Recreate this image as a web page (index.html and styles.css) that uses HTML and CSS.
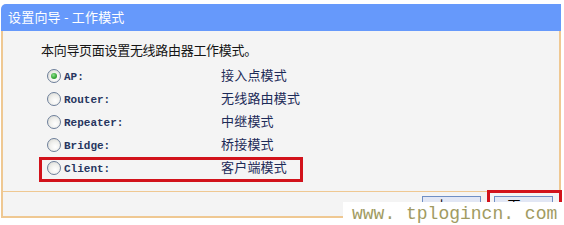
FILE: index.html
```html
<!DOCTYPE html>
<html lang="zh-CN">
<head>
<meta charset="utf-8">
<title>设置向导 - 工作模式</title>
<link rel="stylesheet" href="styles.css">
</head>
<body>
<div class="wizard">
  <div class="wizard-title">设置向导 - 工作模式</div>
  <div class="wizard-body">
    <p class="intro">本向导页面设置无线路由器工作模式。</p>
    <ul class="modes">
      <li class="mode"><span class="radio checked"></span><span class="mode-key">AP:</span><span class="mode-name">接入点模式</span></li>
      <li class="mode"><span class="radio"></span><span class="mode-key">Router:</span><span class="mode-name">无线路由模式</span></li>
      <li class="mode"><span class="radio"></span><span class="mode-key">Repeater:</span><span class="mode-name">中继模式</span></li>
      <li class="mode"><span class="radio"></span><span class="mode-key">Bridge:</span><span class="mode-name">桥接模式</span></li>
      <li class="mode marked"><span class="radio"></span><span class="mode-key">Client:</span><span class="mode-name">客户端模式</span></li>
    </ul>
  </div>
  <div class="wizard-foot">
    <button class="btn" type="button"><span class="btn-label">上一步</span></button>
    <button class="btn btn-next" type="button"><span class="btn-label">下一步</span></button>
  </div>
</div>
<div class="watermark">www. tplogincn. com</div>
</body>
</html>
```
FILE: styles.css
```css
html, body {
  margin: 0;
  padding: 0;
  background: #ffffff;
}

body {
  position: relative;
  width: 564px;
  height: 225px;
  overflow: hidden;
  font-family: "Noto Sans CJK SC", "Noto Sans", sans-serif;
}

.wizard {
  margin: 4px 0 0 1px;
  width: 560px;
}

.wizard-title {
  height: 27px;
  line-height: 26px;
  padding-left: 7px;
  background: #6699fb;
  border-radius: 5px 0 0 0;
  color: #ffffff;
  font-size: 13px;
  letter-spacing: 0.2px;
}

.wizard-body {
  height: 160px;
  box-sizing: border-box;
  padding: 9px 0 0 38px;
  background: #f4f4f4;
  border-left: 2px solid #efc892;
  border-right: 2px solid #efc892;
}

.intro {
  margin: 0;
  height: 20px;
  line-height: 20px;
  font-size: 13px;
  letter-spacing: -0.3px;
  color: #151515;
}

.modes {
  list-style: none;
  margin: 4px 0 0 0;
  padding: 0 0 0 6px;
}

.mode {
  position: relative;
  display: flex;
  align-items: center;
  height: 23px;
}

.radio {
  flex: none;
  width: 12px;
  height: 12px;
  border: 1px solid #6d7f9a;
  border-radius: 50%;
  background: radial-gradient(circle at 60% 65%, #ffffff 0%, #f1f1ee 45%, #d4d4cf 100%);
  position: relative;
}

.radio.checked::after {
  content: "";
  position: absolute;
  left: 3px;
  top: 3px;
  width: 6px;
  height: 6px;
  border-radius: 50%;
  background: radial-gradient(circle at 40% 35%, #8ee08e 0%, #3aa83a 55%, #1f8a1f 100%);
}

.mode-key {
  width: 157px;
  margin-left: 3px;
  font-family: "Liberation Mono", monospace;
  font-size: 11px;
  font-weight: bold;
  color: #27365f;
  padding-top: 3px;
}

.mode-name {
  font-size: 13px;
  color: #1d2b58;
  letter-spacing: 0.2px;
  margin-top: -3px;
}

.mode.marked::after {
  content: "";
  position: absolute;
  left: -8px;
  top: 1px;
  width: 258px;
  height: 19px;
  border: 3px solid #d2121b;
}

.wizard-foot {
  height: 27px;
  box-sizing: border-box;
  padding: 4px 6px 0 0;
  display: flex;
  justify-content: flex-end;
  gap: 13px;
  background: #f4f4f4;
  border-top: 1px solid #efc892;
  border-bottom: 2px solid #efc892;
  border-left: 2px solid #efc892;
  border-right: 2px solid #efc892;
}

.btn {
  position: relative;
  display: flex;
  justify-content: center;
  align-items: flex-start;
  width: 59px;
  height: 24px;
  padding: 1px 0 0 6px;
  border: 1px solid #6f8fc5;
  background: #e2e7f5;
  font-family: "Noto Sans CJK SC", sans-serif;
  font-size: 13px;
  color: #000000;
}

.btn-label {
  line-height: 14px;
  letter-spacing: 6px;
}

.btn-next::after {
  content: "";
  position: absolute;
  left: -8px;
  top: -7px;
  width: 69px;
  height: 40px;
  border: 3px solid #d2121b;
}

.watermark {
  position: absolute;
  left: 343px;
  top: 202px;
  width: 221px;
  height: 23px;
  box-sizing: border-box;
  padding-left: 9px;
  background: #ffffff;
  font-family: "Liberation Mono", monospace;
  font-size: 18px;
  line-height: 24px;
  color: #a19b62;
  white-space: pre;
}
```
